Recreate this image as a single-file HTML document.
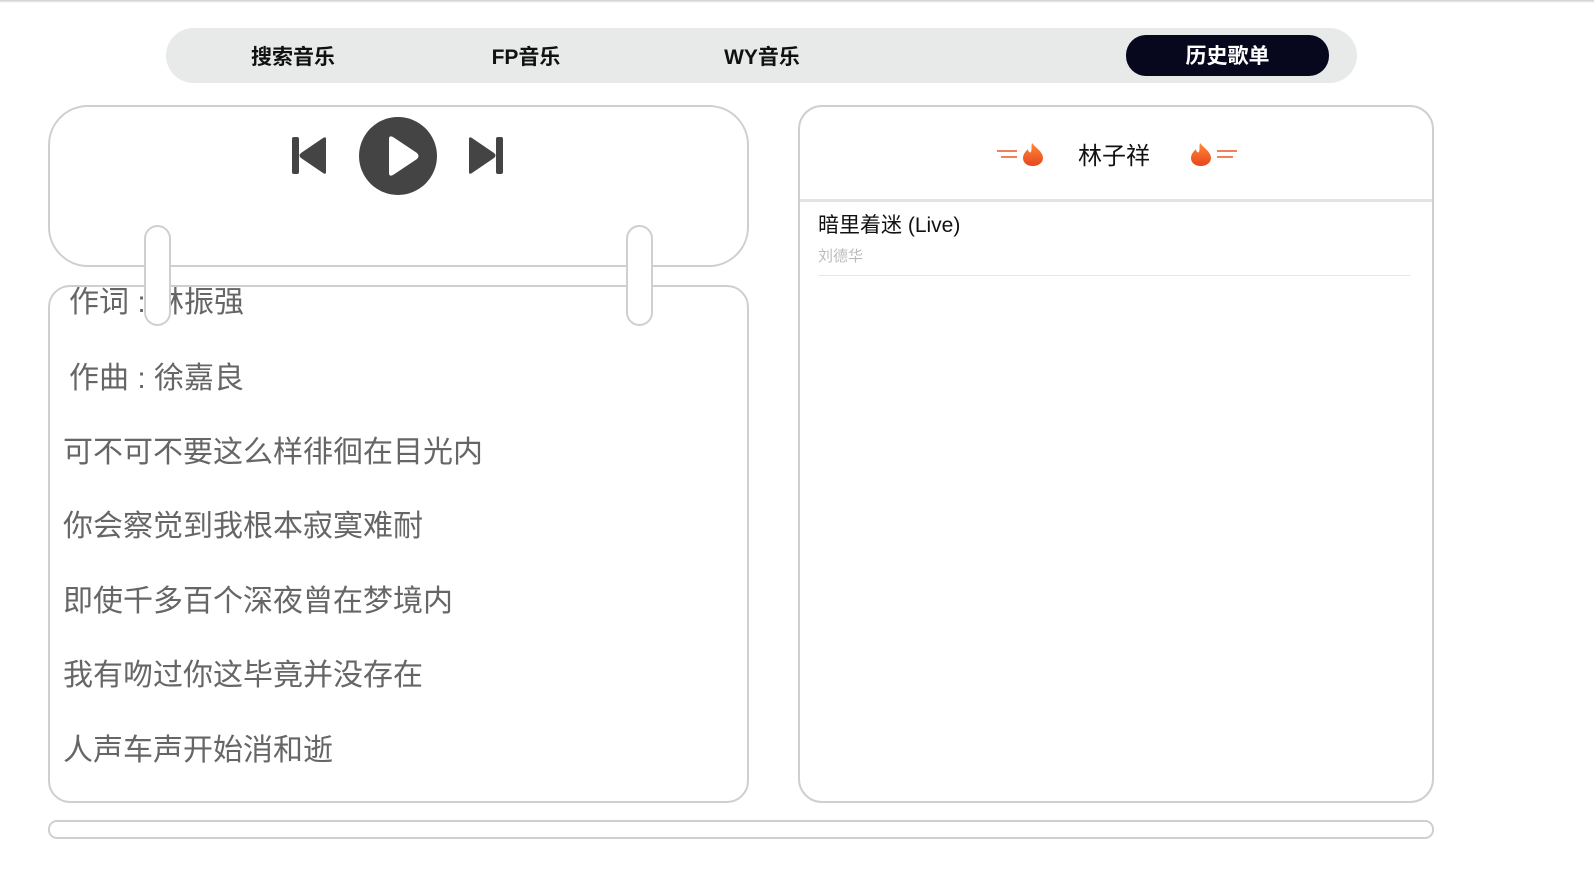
<!DOCTYPE html>
<html><head><meta charset="utf-8"><style>
*{margin:0;padding:0;box-sizing:border-box}
body{width:1594px;height:894px;background:#fff;position:relative;overflow:hidden;font-family:"Liberation Sans","Noto Sans CJK SC",sans-serif}
.top{position:absolute;left:0;top:0;width:1594px;height:3px;background:linear-gradient(#ccc,#fff)}
.nav{position:absolute;left:166px;top:28px;width:1191px;height:55px;background:#e8eaea;border-radius:28px}
.nav span{position:absolute;top:2px;line-height:55px;font-size:21px;font-weight:bold;color:#111;transform:translateX(-50%)}
.pill{position:absolute;left:960px;top:7px;width:203px;height:41px;background:#07071e;border-radius:20px;color:#fff;font-size:21px;font-weight:bold;text-align:center;line-height:43px}
.box{position:absolute;border:2px solid #cfcfcf;background:#fff}
.knob{position:absolute;width:27px;height:101px;top:225px;border:2px solid #cfcfcf;border-radius:14px;background:#fff}
.lyr{position:absolute;left:0;font-size:30px;color:#666;white-space:nowrap;line-height:40px}
</style></head><body>
<div class="top"></div>
<div class="nav">
<span style="left:127px">搜索音乐</span>
<span style="left:360px">FP音乐</span>
<span style="left:596px">WY音乐</span>
<div class="pill">历史歌单</div>
</div>

<div class="box" style="left:48px;top:105px;width:701px;height:162px;border-radius:40px"></div>
<svg style="position:absolute;left:280px;top:110px" width="240" height="90" viewBox="280 110 240 90">
<rect x="292" y="137" width="7" height="37" rx="2" fill="#444"/>
<path d="M326 139 L326 172 Q326 175 323 173 L301 158 Q298 155.5 301 153 L323 138 Q326 136 326 139Z" fill="#444"/>
<ellipse cx="398" cy="156" rx="39" ry="39" fill="#444"/>
<path d="M389 139 L389 173 Q389 177 393 175 L417 159 Q420 156 417 153 L393 137 Q389 135 389 139Z" fill="#fff"/>
<rect x="496" y="137" width="7" height="37" rx="2" fill="#444"/>
<path d="M469 139 L469 172 Q469 175 472 173 L494 158 Q497 155.5 494 153 L472 138 Q469 136 469 139Z" fill="#444"/>
</svg>

<div class="box" style="left:48px;top:285px;width:701px;height:518px;border-radius:22px;overflow:hidden">
<div style="position:absolute;left:0;top:0;width:100%;height:100%">
<div class="lyr" style="left:19px;top:-4px">作词 : 林振强</div>
<div class="lyr" style="left:19px;top:72px">作曲 : 徐嘉良</div>
<div class="lyr" style="left:13px;top:146px">可不可不要这么样徘徊在目光内</div>
<div class="lyr" style="left:13px;top:220px">你会察觉到我根本寂寞难耐</div>
<div class="lyr" style="left:13px;top:295px">即使千多百个深夜曾在梦境内</div>
<div class="lyr" style="left:13px;top:369px">我有吻过你这毕竟并没存在</div>
<div class="lyr" style="left:13px;top:444px">人声车声开始消和逝</div>
</div>
</div>
<div class="knob" style="left:144px"></div>
<div class="knob" style="left:626px"></div>

<div class="box" style="left:798px;top:105px;width:636px;height:698px;border-radius:24px;overflow:hidden">
<div style="position:absolute;left:0;top:92px;width:100%;height:3px;background:#e3e3e3"></div>
<div style="position:absolute;left:278px;top:33px;font-size:24px;color:#111;line-height:34px">林子祥</div>
<div style="position:absolute;left:18px;top:105px;font-size:21px;color:#111;line-height:28px">暗里着迷 (Live)</div>
<div style="position:absolute;left:18px;top:140px;font-size:15px;color:#bbb;line-height:20px">刘德华</div>
<div style="position:absolute;left:18px;top:168px;width:592px;height:1px;background:#e6e6e6"></div>
</div>
<svg style="position:absolute;left:990px;top:138px" width="250" height="32" viewBox="990 138 250 32">
<defs><linearGradient id="f" x1="0" y1="0" x2="0" y2="1"><stop offset="0" stop-color="#ff8a3a"/><stop offset="1" stop-color="#e8451d"/></linearGradient></defs>
<rect x="997" y="150" width="20" height="2" fill="#f2805a"/><rect x="1001" y="156" width="16" height="2" fill="#f2805a"/>
<path d="M1032 143 C1036 148 1043 152 1043 158 C1043 163 1038 166 1033 166 C1027 166 1023 163 1023 158 C1023 154 1026 151 1028 149 C1028 152 1030 153 1031 152 C1032 149 1031 146 1032 143Z" fill="url(#f)"/>
<path d="M1200 143 C1204 148 1211 152 1211 158 C1211 163 1206 166 1201 166 C1195 166 1191 163 1191 158 C1191 154 1194 151 1196 149 C1196 152 1198 153 1199 152 C1200 149 1199 146 1200 143Z" fill="url(#f)"/>
<rect x="1217" y="150" width="20" height="2" fill="#f2805a"/><rect x="1217" y="156" width="16" height="2" fill="#f2805a"/>
</svg>

<div class="box" style="left:48px;top:820px;width:1386px;height:19px;border-radius:9px"></div>
</body></html>
